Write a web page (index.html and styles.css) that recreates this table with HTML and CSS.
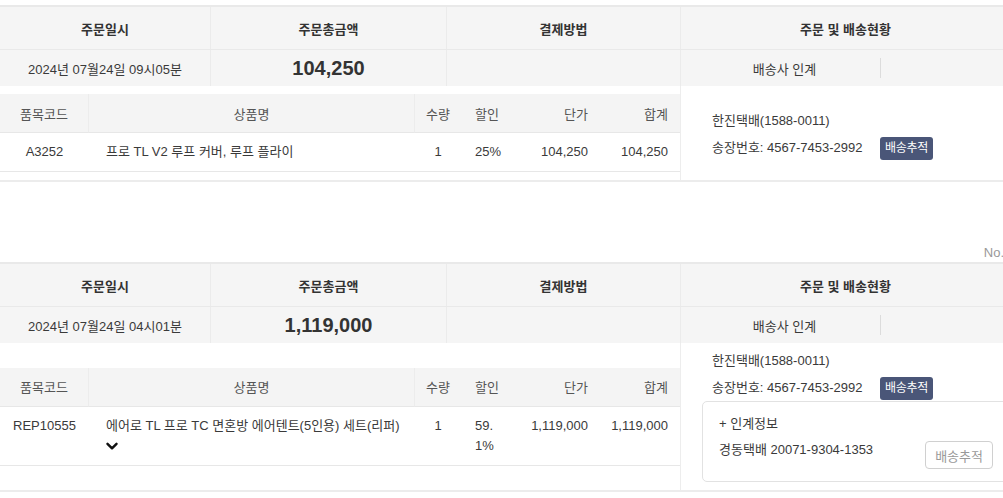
FILE: index.html
```html
<!DOCTYPE html>
<html lang="ko">
<head>
<meta charset="utf-8">
<title>주문내역</title>
<link rel="stylesheet" href="styles.css">
</head>
<body>
<div class="page">
  <section class="order">
    <div class="grid-row head">
      <div class="c">주문일시</div>
      <div class="c">주문총금액</div>
      <div class="c">결제방법</div>
      <div class="c last">주문 및 배송현황</div>
    </div>
    <div class="grid-row sub">
      <div class="c date">2024년 07월24일 09시05분</div>
      <div class="c amount">104,250</div>
      <div class="c"></div>
      <div class="c last status"><span class="status-label">배송사 인계</span><span class="status-sep"></span></div>
    </div>
    <div class="body">
      <div class="items-cell">
        <div class="items">
          <div class="ih ih-sep">품목코드</div>
          <div class="ih ih-sep">상품명</div>
          <div class="ih">수량</div>
          <div class="ih">할인</div>
          <div class="ih right">단가</div>
          <div class="ih right">합계</div>
          <div class="id center">A3252</div>
          <div class="id name">프로 TL V2 루프 커버, 루프 플라이</div>
          <div class="id center">1</div>
          <div class="id disc">25%</div>
          <div class="id right">104,250</div>
          <div class="id right">104,250</div>
        </div>
      </div>
      <div class="ship-cell compact">
        <div class="ship-line">한진택배(1588-0011)</div>
        <div class="ship-line">송장번호: 4567-7453-2992 <button class="track">배송추적</button></div>
      </div>
    </div>
  </section>

  <div class="no-row">No.</div>

  <section class="order">
    <div class="grid-row head">
      <div class="c">주문일시</div>
      <div class="c">주문총금액</div>
      <div class="c">결제방법</div>
      <div class="c last">주문 및 배송현황</div>
    </div>
    <div class="grid-row sub">
      <div class="c date">2024년 07월24일 04시01분</div>
      <div class="c amount">1,119,000</div>
      <div class="c"></div>
      <div class="c last status"><span class="status-label">배송사 인계</span><span class="status-sep"></span></div>
    </div>
    <div class="body">
      <div class="items-cell">
        <div class="items">
          <div class="ih ih-sep">품목코드</div>
          <div class="ih ih-sep">상품명</div>
          <div class="ih">수량</div>
          <div class="ih">할인</div>
          <div class="ih right">단가</div>
          <div class="ih right">합계</div>
          <div class="id center">REP10555</div>
          <div class="id name">에어로 TL 프로 TC 면혼방 에어텐트(5인용) 세트(리퍼)
            <span class="toggle"><svg width="12" height="9" viewBox="0 0 12 9"><polyline points="1.5,1.8 6,6.3 10.5,1.8" fill="none" stroke="#111" stroke-width="2.4" stroke-linecap="round" stroke-linejoin="round"/></svg></span>
          </div>
          <div class="id center">1</div>
          <div class="id disc">59.<wbr>1%</div>
          <div class="id right">1,119,000</div>
          <div class="id right">1,119,000</div>
        </div>
      </div>
      <div class="ship-cell">
        <div class="ship-line">한진택배(1588-0011)</div>
        <div class="ship-line">송장번호: 4567-7453-2992 <button class="track">배송추적</button></div>
        <div class="handover">
          <div class="handover-title">+ 인계정보</div>
          <div class="handover-row">
            <span class="handover-text">경동택배 20071-9304-1353</span>
            <button class="track-outline">배송추적</button>
          </div>
        </div>
      </div>
    </div>
  </section>
</div>
</body>
</html>
```

FILE: styles.css
```css
* { box-sizing: border-box; }

html, body {
  margin: 0;
  padding: 0;
  overflow: hidden;
  background: #fff;
}

body {
  font-family: "Liberation Sans", "Noto Sans CJK KR", sans-serif;
  font-size: 13px;
  color: #3a3a3a;
}

.page {
  width: 1010px;
  padding-top: 5px;
}

.order {
  border-top: 2px solid #e9e9e9;
  border-bottom: 2px solid #ececec;
}

.grid-row {
  display: grid;
  grid-template-columns: 211px 236px 234px 329px;
  background: #f5f5f5;
}

.grid-row .c {
  display: flex;
  align-items: center;
  justify-content: center;
  border-right: 1px solid #ebebeb;
}

.grid-row .c.last { border-right: none; }

.head {
  height: 43px;
  border-bottom: 1px solid #e9e9e9;
}

.head .c {
  font-weight: bold;
  color: #333;
}

.sub { height: 36px; }

.date { color: #3a3a3a; }

.grid-row .amount {
  font-size: 20px;
  font-weight: bold;
  color: #333;
}

.grid-row .status { justify-content: flex-start; }

.status-label {
  width: 199px;
  padding-left: 8px;
  text-align: center;
}

.status-sep {
  width: 1px;
  height: 20px;
  background: #dcdcdc;
}

.body { display: flex; }

.items-cell {
  width: 681px;
  flex: none;
  border-right: 1px solid #ededed;
  padding: 8px 0;
  display: flex;
  flex-direction: column;
  justify-content: center;
}

.items {
  display: grid;
  grid-template-columns: 89px 326px 46px 52px 87px 80px;
}

.ih {
  height: 39px;
  background: #f4f4f4;
  border-bottom: 1px solid #e7e7e7;
  display: flex;
  align-items: center;
  justify-content: center;
  color: #555;
}

.ih-sep { border-right: 1px solid #ececec; }

.ih.right {
  justify-content: flex-end;
  padding-right: 12px;
}

.id {
  padding: 9px 0 9px;
  line-height: 20px;
  border-bottom: 1px solid #e7e7e7;
  color: #3a3a3a;
}

.id.center {
  text-align: center;
  padding-left: 10px;
  padding-right: 10px;
}

.id.disc {
  text-align: left;
  padding-left: 14px;
  padding-right: 10px;
}

.id.right {
  text-align: right;
  padding-right: 12px;
}

.id.name { padding-left: 17px; }

.toggle {
  display: block;
  height: 20px;
  padding-top: 6px;
}

.toggle svg { display: block; }

.ship-cell {
  flex: 1;
  padding: 4px 0 8px 21px;
  display: flex;
  flex-direction: column;
  justify-content: center;
}

.ship-cell.compact { padding-top: 9px; }

.ship-line {
  line-height: 27px;
  padding-left: 10px;
  color: #3a3a3a;
}

.track {
  display: inline-block;
  vertical-align: middle;
  height: 23px;
  line-height: 23px;
  margin-left: 14px;
  padding: 0 5px;
  border: none;
  border-radius: 3px;
  background: #4a5678;
  color: #fff;
  font-family: inherit;
  font-size: 12px;
  letter-spacing: -0.3px;
}

.handover {
  border: 1px solid #e2e2e2;
  border-radius: 5px;
  padding: 10px 16px 12px 16px;
}

.handover-title { line-height: 24px; }

.handover-row {
  display: flex;
  justify-content: space-between;
  align-items: flex-start;
}

.handover-text {
  line-height: 24px;
  margin-top: 2px;
}

.track-outline {
  margin-top: 5px;
  height: 28px;
  padding: 0 9px;
  border: 1px solid #d0d0d0;
  border-radius: 4px;
  background: #fff;
  color: #999;
  font-family: inherit;
  font-size: 13px;
}

.no-row {
  margin-top: 62px;
  height: 18px;
  line-height: 18px;
  text-align: right;
  padding-right: 6px;
  color: #999;
}
```
